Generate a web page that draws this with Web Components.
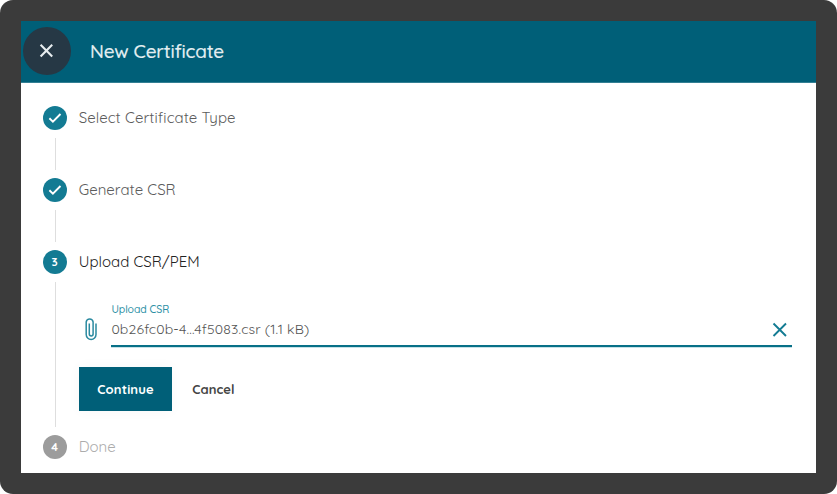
<!DOCTYPE html>
<html lang="en">
<head>
<meta charset="utf-8">
<title>New Certificate</title>
<style>
html, body { margin: 0; height: 100%; background: #fff; }
body { font-family: Quicksand, Lato, sans-serif; overflow: hidden; }
</style>
</head>
<body>
<cert-dialog heading="New Certificate">
  <cert-step state="done" label="Select Certificate Type" span="157"></cert-step>
  <cert-step state="done" label="Generate CSR" span="97"></cert-step>
  <cert-step state="active" number="3" label="Upload CSR/PEM" span="121"></cert-step>
  <cert-step state="pending" number="4" label="Done" span="37"></cert-step>
</cert-dialog>
<script>
/* One line of text, tracked so that it fills the width given in pixels. */
class TrackedText extends HTMLElement {
  connectedCallback() {
    const root = this.attachShadow({ mode: 'open' });
    root.innerHTML = `<style>:host{display:inline-block;white-space:pre}span{display:inline-block}</style><span></span>`;
    const span = root.querySelector('span');
    const text = this.getAttribute('text');
    span.textContent = text;
    const natural = span.getBoundingClientRect().width;
    span.style.letterSpacing = ((+this.getAttribute('span') - natural) / text.length).toFixed(3) + 'px';
  }
}

class CertDialog extends HTMLElement {
  connectedCallback() {
    this.attachShadow({ mode: 'open' }).innerHTML = `
<style>
:host{display:block;box-sizing:border-box;width:837px;height:494px;padding:21px;background:#3b3b3b;border-radius:13px}
.panel{height:452px;width:795px;background:#fff}
header{box-sizing:border-box;height:62px;display:flex;align-items:center;background:#005f78;border-bottom:1px solid #337f93;padding:0 0 1px 2px;color:#e4eff2}
button{width:48px;height:48px;border:0;border-radius:50%;background:#263845;padding:0;display:grid;place-items:center}
h1{margin:0 0 0 19px;font-size:19px;line-height:26px;font-weight:500;-webkit-text-stroke:.15px #e4eff2}
main{padding:23.4px 24px 0 21.7px}
</style>
<div class="panel">
<header><button aria-label="Close"><svg width="48" height="48" viewBox="0 0 48 48"><path d="M17.6 17.8 29.2 29.4M29.2 17.8 17.6 29.4" stroke="#e8edef" stroke-width="2.1"/></svg></button>
<h1><tracked-text text="${this.getAttribute('heading')}" span="134"></tracked-text></h1></header>
<main><slot></slot></main></div>`;
  }
}

class CertStep extends HTMLElement {
  connectedCallback() {
    const state = this.getAttribute('state');
    const mark = state === 'done'
      ? '<svg width="24" height="24" viewBox="0 0 24 24"><path d="m6.4 12.2 3.5 3.4 7.6-7.6" fill="none" stroke="#fff" stroke-width="1.9"/></svg>'
      : this.getAttribute('number');
    const content = state === 'active'
      ? '<file-field label="Upload CSR" value="0b26fc0b-4...4f5083.csr (1.1 kB)"></file-field><action-row></action-row>'
      : '<slot></slot>';
    this.attachShadow({ mode: 'open' }).innerHTML = `
<style>
:host{display:grid;grid-template-columns:24px 1fr;column-gap:12px;grid-template-rows:24px auto;color:#5c5c5c}
:host([state=active]){color:#222}
:host([state=pending]){color:#acacac}
.dot{width:24px;height:24px;border-radius:50%;background:#137b93;color:#fff;display:grid;place-items:center;font-size:11.5px;font-weight:700;line-height:23px}
:host([state=pending]) .dot{background:#9c9c9c}
.label{font-size:15px;line-height:24px;font-weight:450}
.rail{width:1px;height:31.8px;margin:8px 0 8px 12px;background:#dedede}
:host([state=active]) .rail{height:145px}
:host([state=pending]) .rail{display:none}
</style>
<div class="dot">${mark}</div>
<div class="label"><tracked-text text="${this.getAttribute('label')}" span="${this.getAttribute('span')}"></tracked-text></div>
<div class="rail"></div><div class="content">${content}</div>`;
  }
}

class FileField extends HTMLElement {
  connectedCallback() {
    this.attachShadow({ mode: 'open' }).innerHTML = `
<style>
:host{display:grid;grid-template-columns:32.7px 680.6px;padding-top:28px}
.clip{padding-top:14.5px;height:26px}
svg{display:block}
.field{box-sizing:border-box;height:45px;border-bottom:2px solid #087087;display:grid;grid-template-columns:1fr 24px;box-shadow:0 .5px 0 #8fc4cf}
.label{font-size:10.5px;line-height:14px;color:#2b8fa5;font-weight:500}
.value{font-size:14px;line-height:24px;color:#555;font-weight:450;margin-top:1px}
.clear{padding-top:15.6px}
</style>
<div class="clip"><svg width="24" height="26" viewBox="0 0 24 26"><path d="M17 7.4v11.2a4.8 4.8 0 0 1-9.8 0V5.9a3.5 3.5 0 0 1 6.9 0v12.2a1.9 1.9 0 0 1-3.8 0V7.4" fill="none" stroke="#2b8aa0" stroke-width="1.5"/></svg></div>
<div class="field"><div><div class="label"><tracked-text text="${this.getAttribute('label')}" span="58"></tracked-text></div>
<div class="value"><tracked-text text="${this.getAttribute('value')}" span="198"></tracked-text></div></div>
<div class="clear"><svg width="24" height="24" viewBox="0 0 24 24"><path d="M5.5 5.5 18 18M18 5.5 5.5 18" stroke="#137b93" stroke-width="1.9"/></svg></div></div>`;
  }
}

class ActionRow extends HTMLElement {
  connectedCallback() {
    this.attachShadow({ mode: 'open' }).innerHTML = `
<style>
:host{display:flex;margin-top:20.5px;height:44px;font-size:13px;font-weight:700}
button{font:inherit;border:0;padding:0;margin:0;height:44px;background:none;color:#444;text-align:left}
.go{width:93.5px;padding-left:18.6px;background:#005f78;color:#fff;box-shadow:0 0 14px rgba(0,0,0,.035)}
.cancel{margin-left:20px}
</style>
<button class="go"><tracked-text text="Continue" span="56.5"></tracked-text></button>
<button class="cancel"><tracked-text text="Cancel" span="42.5"></tracked-text></button>`;
  }
}

customElements.define('tracked-text', TrackedText);
customElements.define('cert-dialog', CertDialog);
customElements.define('file-field', FileField);
customElements.define('action-row', ActionRow);
customElements.define('cert-step', CertStep);
</script>
</body>
</html>
